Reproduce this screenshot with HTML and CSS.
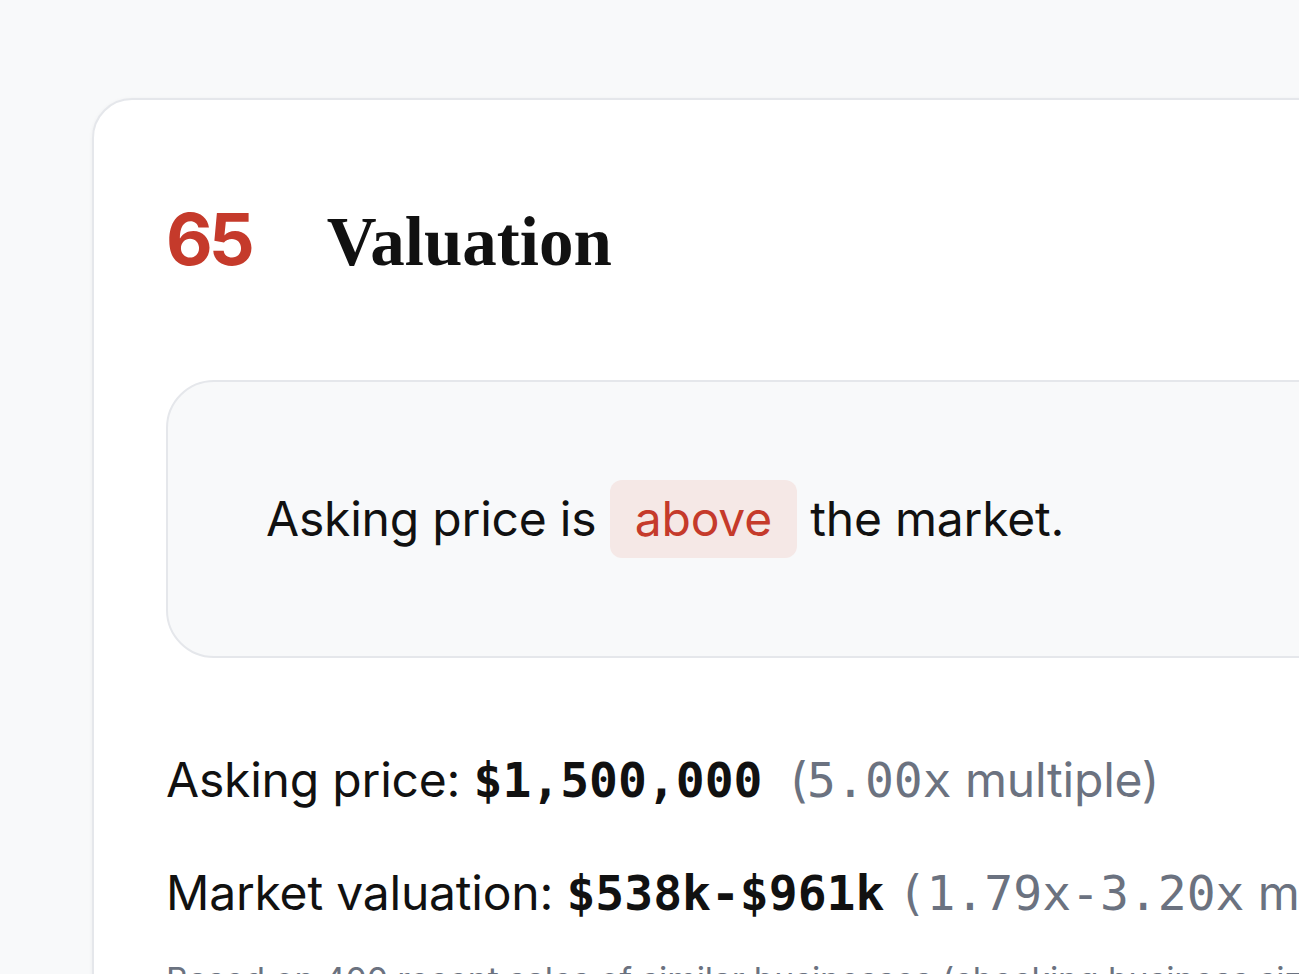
FILE: index.html
```html
<!DOCTYPE html>
<html lang="en">
<head>
<meta charset="utf-8">
<title>Valuation</title>
<link rel="stylesheet" href="styles.css">
</head>
<body>
<main class="page">
  <section class="card">
    <header class="card-head">
      <span class="score">65</span>
      <h2 class="title">Valuation</h2>
    </header>
    <div class="callout">
      <p class="callout-text">Asking price is <span class="badge">above</span> the market.</p>
    </div>
    <div class="facts">
      <p class="fact">Asking price: <span class="mono strong">$1,500,000</span> <span class="muted paren">(<span class="mono">5.00x</span> multiple)</span></p>
      <p class="fact">Market valuation: <span class="mono strong">$538k-$961k</span> <span class="muted mono">(1.79x-3.20x</span><span class="muted"> multiple)</span></p>
      <p class="note">Based on 400 recent sales of similar businesses (checking business size, industry and margins)</p>
    </div>
  </section>
</main>
</body>
</html>
```
FILE: styles.css
```css
html, body {
  margin: 0;
  padding: 0;
  overflow: hidden;
  background: #f8f9fa;
}

body {
  font-family: Inter, "Noto Sans", "Liberation Sans", sans-serif;
  color: #111111;
}

.page {
  padding: 98px 0 0 92px;
}

.card {
  width: 1600px;
  min-height: 1000px;
  box-sizing: border-box;
  background: #ffffff;
  border: 2px solid #e5e7eb;
  border-radius: 40px;
  box-shadow: 0 1px 4px rgba(17, 24, 39, 0.05);
  padding: 96px 72px 0 72px;
}

.card-head {
  display: flex;
  align-items: baseline;
  gap: 76px;
}

.score {
  font-family: Inter, "Liberation Sans", sans-serif;
  font-weight: 700;
  font-size: 72px;
  line-height: 86px;
  color: #c53a2b;
  letter-spacing: -4px;
}

.title {
  margin: 0;
  font-family: "Liberation Serif", "DejaVu Serif", serif;
  font-weight: 700;
  font-size: 69px;
  line-height: 80px;
  color: #111111;
}

.callout {
  margin-top: 98px;
  background: #f8f9fa;
  border: 2px solid #e5e7eb;
  border-radius: 48px;
  padding: 98px 98px;
}

.callout-text {
  margin: 0;
  font-size: 48px;
  line-height: 78px;
  letter-spacing: -0.2px;
  color: #111111;
}

.badge {
  display: inline-block;
  background: #f5e8e6;
  color: #c53a2b;
  border-radius: 12px;
  padding: 10px 25px;
  line-height: 58px;
}

.facts {
  margin-top: 86px;
  display: flex;
  flex-direction: column;
  gap: 41px;
}

.fact {
  margin: 0;
  font-size: 48px;
  line-height: 72px;
  letter-spacing: -0.2px;
  white-space: nowrap;
}

.mono {
  font-family: "DejaVu Sans Mono", "Liberation Mono", monospace;
  letter-spacing: 0;
}

.strong {
  font-weight: 700;
  color: #111111;
}

.muted {
  color: #6b7280;
}

.paren {
  margin-left: 14px;
}

.note {
  margin: -16px 0 0 0;
  font-size: 34px;
  line-height: 51px;
  letter-spacing: -0.2px;
  color: #6b7280;
  white-space: nowrap;
}
```
